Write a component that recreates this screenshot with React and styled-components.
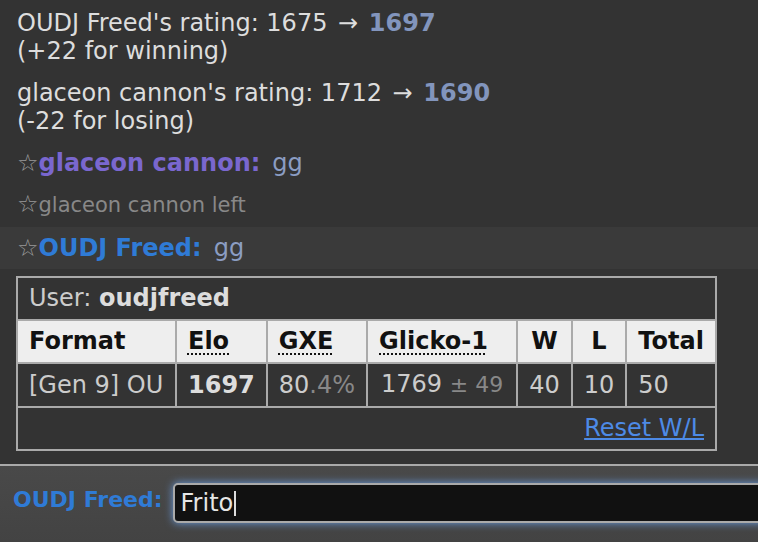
import React from "react";
import styled, { createGlobalStyle } from "styled-components";

const GlobalStyle = createGlobalStyle`
  html, body, #root {
    margin: 0;
    height: 100%;
  }
  body {
    background: #333;
    font-family: "DejaVu Sans", Verdana, sans-serif;
  }
`;

const Room = styled.div`
  height: 100vh;
  display: flex;
  flex-direction: column;
  background: #333;
  overflow: hidden;
`;

const Log = styled.div`
  flex: 1;
  padding-top: 2px;
  overflow: hidden;
`;

const Line = styled.div`
  padding: 7px 17px;
  font-size: 24px;
  line-height: 28px;
  color: #ddd;
  background: ${(props) => (props.$highlight ? "#3a3a3a" : "transparent")};
`;

const Notice = styled.div`
  padding: 7px 17px;
  font-size: 21px;
  line-height: 29px;
  color: #888;
`;

const Arrow = styled.span`
  margin: 0 3px;
`;

const Rating = styled.strong`
  color: #8295bd;
`;

const Star = styled.span`
  color: #999;
  font-weight: normal;
  font-size: 24px;
  line-height: 0;
`;

const Name = styled.strong`
  color: ${(props) => props.$color};
`;

const Message = styled.span`
  color: #8b9dc3;
  margin-left: 12px;
`;

const HtmlBox = styled.div`
  padding: 7px 16px;
`;

const Ladder = styled.table`
  width: 701px;
  border: 2px solid #aaa;
  border-spacing: 0;
  font-size: 24px;
  line-height: 28px;
  color: #ccc;
`;

const Cell = styled.td`
  box-sizing: border-box;
  padding: 6px 11px 7px;
  border-bottom: ${(props) => (props.$last ? "none" : "2px solid #aaa")};
  border-right: ${(props) => (props.$end ? "none" : "2px solid #aaa")};
  text-align: ${(props) => props.$align || "left"};
  white-space: nowrap;
`;

const Head = styled.th`
  box-sizing: border-box;
  width: ${(props) => props.$w}px;
  padding: 6px 11px 7px;
  background: #eee;
  color: #111;
  border-bottom: 2px solid #aaa;
  border-right: ${(props) => (props.$end ? "none" : "2px solid #aaa")};
  text-align: ${(props) => props.$align || "left"};
  white-space: nowrap;
`;

const Abbr = styled.abbr`
  text-decoration: underline dotted;
  text-decoration-thickness: 2px;
  text-underline-offset: 4px;
`;

const Dim = styled.span`
  color: #888;
  font-size: ${(props) => (props.$small ? "22px" : "inherit")};
`;

const Strong = styled.strong`
  color: #ddd;
`;

const ResetLink = styled.a`
  color: #4d8ae6;
  text-decoration: underline;
  cursor: pointer;
`;

const ChatBar = styled.div`
  display: flex;
  align-items: flex-start;
  gap: 10px;
  padding: 17px 0 19px 13px;
  border-top: 2px solid #aaa;
  background: linear-gradient(#494949, #434343);
`;

const Label = styled.strong`
  margin-top: 4px;
  font-size: 22px;
  line-height: 25px;
  color: #2f7bd6;
  white-space: nowrap;
`;

const ChatBox = styled.div`
  flex: 1;
  box-sizing: border-box;
  height: 40px;
  margin-right: -40px;
  padding: 0 6px;
  border: 2px solid #aaa;
  border-radius: 5px;
  background: #111;
  box-shadow: 0 0 8px #6a9ce0;
  color: #e6e6e6;
  font-size: 24px;
  line-height: 36px;
`;

const Caret = styled.span`
  display: inline-block;
  width: 1.5px;
  height: 25px;
  margin-left: 1px;
  vertical-align: -5px;
  background: #ddd;
`;

const columns = [
  { label: "Format", w: 160 },
  { label: "Elo", w: 90, abbr: true },
  { label: "GXE", w: 98, abbr: true },
  { label: "Glicko-1", w: 156, abbr: true },
  { label: "W", w: 53, align: "center" },
  { label: "L", w: 52, align: "center" },
  { label: "Total", w: 88, align: "center" },
];

export default function App() {
  return (
    <>
      <GlobalStyle />
      <Room>
        <Log>
          <Line>
            OUDJ Freed's rating: 1675 <Arrow>→</Arrow> <Rating>1697</Rating>
            <br />
            (+22 for winning)
          </Line>
          <Line>
            glaceon cannon's rating: 1712 <Arrow>→</Arrow> <Rating>1690</Rating>
            <br />
            (-22 for losing)
          </Line>
          <Line>
            <Star>☆</Star>
            <Name $color="#7a67cf">glaceon cannon:</Name>
            <Message>gg</Message>
          </Line>
          <Notice>
            <Star>☆</Star>glaceon cannon left
          </Notice>
          <Line $highlight>
            <Star>☆</Star>
            <Name $color="#2f7bd6">OUDJ Freed:</Name>
            <Message>gg</Message>
          </Line>
          <HtmlBox>
            <Ladder>
              <tbody>
                <tr>
                  <Cell colSpan={7} $end>
                    User: <Strong>oudjfreed</Strong>
                  </Cell>
                </tr>
                <tr>
                  {columns.map((c, i) => (
                    <Head
                      key={c.label}
                      $w={c.w}
                      $align={c.align}
                      $end={i === columns.length - 1}
                    >
                      {c.abbr ? <Abbr>{c.label}</Abbr> : c.label}
                    </Head>
                  ))}
                </tr>
                <tr>
                  <Cell>[Gen 9] OU</Cell>
                  <Cell>
                    <Strong>1697</Strong>
                  </Cell>
                  <Cell>
                    80<Dim>.4%</Dim>
                  </Cell>
                  <Cell $align="center">
                    1769 <Dim $small>± 49</Dim>
                  </Cell>
                  <Cell $align="center">40</Cell>
                  <Cell $align="center">10</Cell>
                  <Cell $end>50</Cell>
                </tr>
                <tr>
                  <Cell colSpan={7} $end $last $align="right">
                    <ResetLink>Reset W/L</ResetLink>
                  </Cell>
                </tr>
              </tbody>
            </Ladder>
          </HtmlBox>
        </Log>
        <ChatBar>
          <Label>OUDJ Freed:</Label>
          <ChatBox>
            Frito
            <Caret />
          </ChatBox>
        </ChatBar>
      </Room>
    </>
  );
}
